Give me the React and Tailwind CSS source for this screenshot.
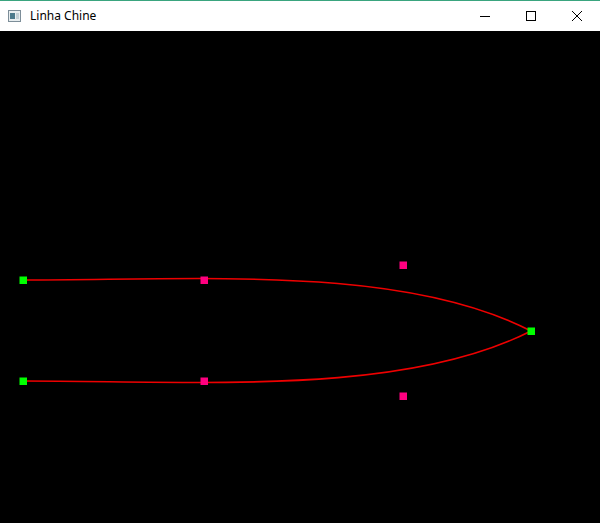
import React from "react";

const points = [
  { x: 23, y: 249, c: "#00ff00" },
  { x: 204, y: 249, c: "#ff0080" },
  { x: 403, y: 234, c: "#ff0080" },
  { x: 531, y: 300, c: "#00ff00" },
  { x: 23, y: 350, c: "#00ff00" },
  { x: 204, y: 350, c: "#ff0080" },
  { x: 403, y: 365, c: "#ff0080" },
];

const TitleBar = () => (
  <div className="flex h-[31px] items-center border-t border-[#3aa57f] bg-white">
    <div className="flex flex-1 items-center gap-[9px] pl-[8px]">
      <svg width="13" height="12" viewBox="0 0 13 12">
        <rect x="0.5" y="0.5" width="12" height="11" fill="#e8eef0" stroke="#7d8e99" />
        <rect x="2" y="3" width="5" height="6" fill="#4c7a8c" />
        <rect x="8" y="3" width="3" height="6" fill="#c3d0d6" />
      </svg>
      <span className="text-[12px] text-black" style={{ fontFamily: '"Noto Sans", "Liberation Sans", sans-serif' }}>
        Linha Chine
      </span>
    </div>
    <div className="flex h-full">
      <div className="flex w-[46px] items-center justify-center">
        <svg width="10" height="10" viewBox="0 0 10 10">
          <line x1="0" y1="5.5" x2="10" y2="5.5" stroke="#000" strokeWidth="1" />
        </svg>
      </div>
      <div className="flex w-[46px] items-center justify-center">
        <svg width="10" height="10" viewBox="0 0 10 10">
          <rect x="0.5" y="0.5" width="9" height="9" fill="none" stroke="#000" strokeWidth="1" />
        </svg>
      </div>
      <div className="flex w-[46px] items-center justify-center">
        <svg width="10" height="10" viewBox="0 0 10 10">
          <path d="M0 0 L10 10 M10 0 L0 10" stroke="#000" strokeWidth="1" />
        </svg>
      </div>
    </div>
  </div>
);

export default function App() {
  return (
    <div className="flex h-[523px] w-[600px] flex-col overflow-hidden bg-black">
      <TitleBar />
      <div className="flex-1 bg-black">
        <svg width="600" height="492" viewBox="0 0 600 492">
          <path d="M23 249 C204 249 403 234 531 300" fill="none" stroke="#ee0000" strokeWidth="1.6" />
          <path d="M23 350 C204 350 403 365 531 300" fill="none" stroke="#ee0000" strokeWidth="1.6" />
          {points.map((p, i) => (
            <rect key={i} x={p.x - 3.5} y={p.y - 3.5} width="7.5" height="7.5" fill={p.c} />
          ))}
        </svg>
      </div>
    </div>
  );
}
